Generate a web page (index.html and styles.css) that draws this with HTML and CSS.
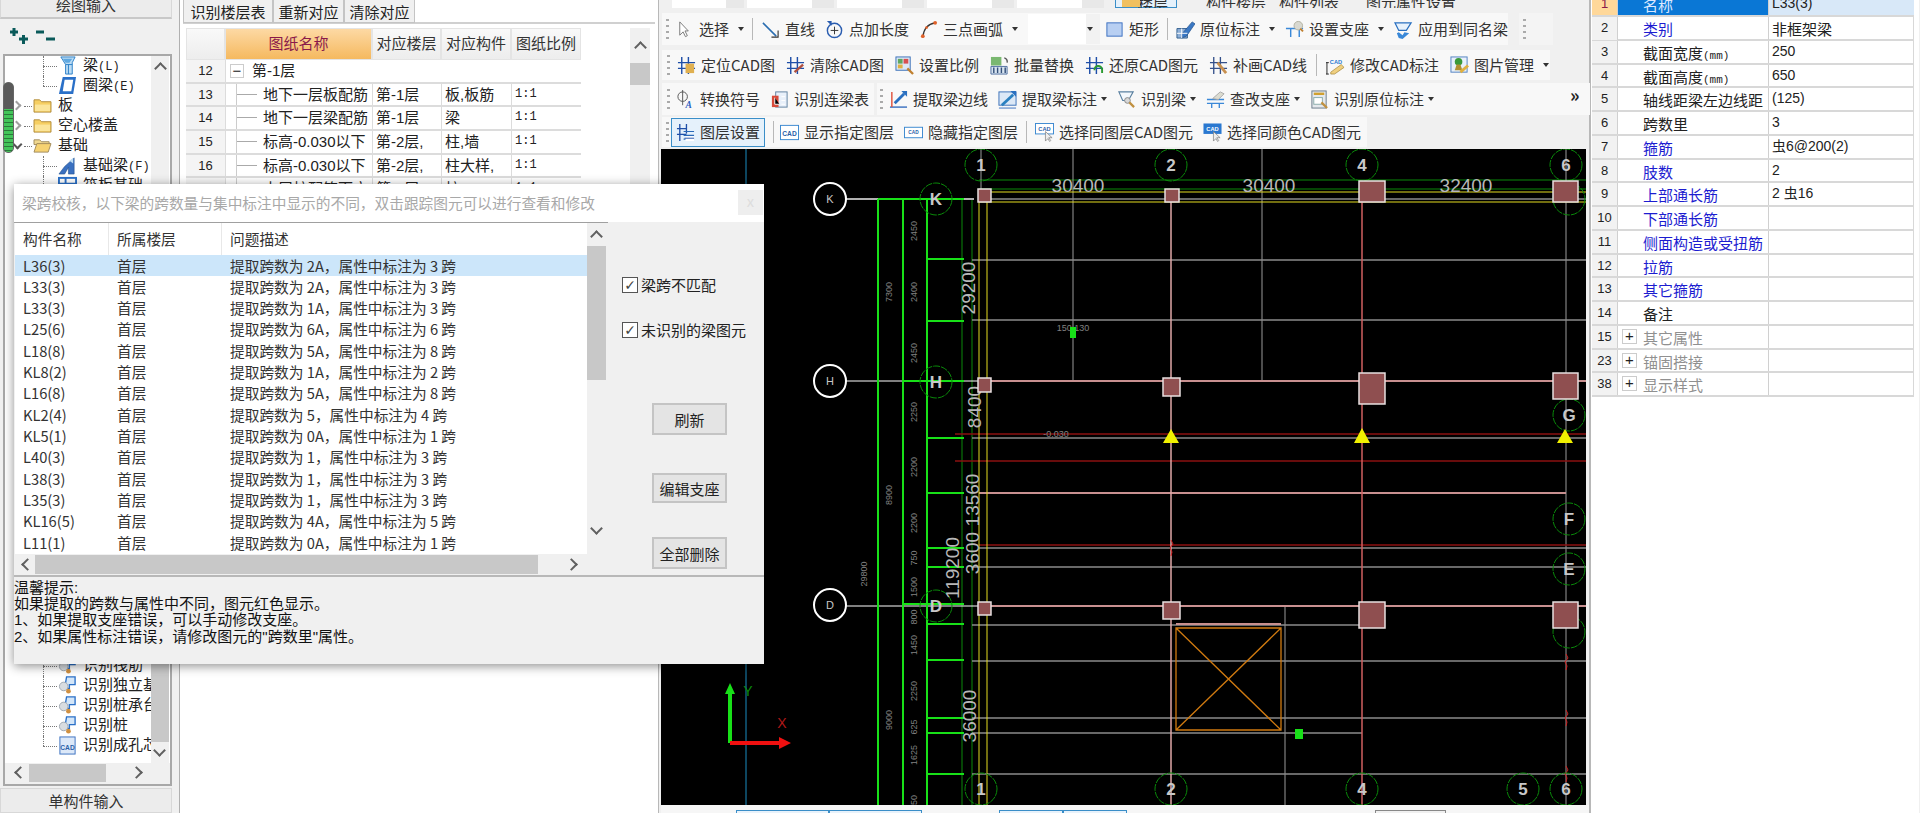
FILE: index.html
```html
<!DOCTYPE html>
<html lang="zh-CN">
<head>
<meta charset="utf-8">
<title>梁跨校核</title>
<link rel="stylesheet" href="styles.css">
</head>
<body>
<svg class="defs" width="0" height="0">
  <defs>
    <symbol id="i-arrow" viewBox="0 0 20 20"><path d="M5 2v14l3.500-3.500 2.500 5 2-1-2.500-5H14z" fill="#fff" stroke="#777"/></symbol>
    <symbol id="i-line" viewBox="0 0 20 20"><path d="M2 3l14 14" stroke="#2a6db0" stroke-width="1.600" fill="none"/><path d="M11 18h7v-7" stroke="#333" stroke-width="1.200" fill="none"/></symbol>
    <symbol id="i-len" viewBox="0 0 20 20"><circle cx="10" cy="11" r="7.500" fill="none" stroke="#2a5db0" stroke-width="1.500"/><path d="M10 7v8M6 11h8" stroke="#333"/><path d="M2 1h5v5z" fill="#2a5db0"/></symbol>
    <symbol id="i-arc" viewBox="0 0 20 20"><path d="M4 18C5 9 10 4 17 3" fill="none" stroke="#333" stroke-width="1.400"/><circle cx="4" cy="17" r="2" fill="#e0622a"/><circle cx="17" cy="3" r="2" fill="#e0622a"/><circle cx="8" cy="8" r="1.500" fill="#e0622a"/></symbol>
    <symbol id="i-rect" viewBox="0 0 20 20"><rect x="2" y="3" width="16" height="14" fill="#b8cff2" stroke="#3a6fc0"/></symbol>
    <symbol id="i-orig" viewBox="0 0 20 20"><path d="M1 9h11v10H1z" fill="#8fb0d8" stroke="#34608f"/><path d="M6 15L17 2l3 2-9 13-5 2z" fill="#3a78c4" stroke="#1f4e8a" stroke-width=".7"/><path d="M1 14h11M6 9v10" stroke="#fff"/></symbol>
    <symbol id="i-support" viewBox="0 0 20 20"><path d="M1 9h18M6 9v9M15 9v9" stroke="#3a88d8" stroke-width="1.500" fill="none"/><circle cx="14" cy="6" r="4.500" fill="#d8d8d0" stroke="#b0b0a0"/><path d="M16 9l3 3" stroke="#c08030" stroke-width="2"/></symbol>
    <symbol id="i-apply" viewBox="0 0 20 20"><path d="M1 3h17l-5 8H5z" fill="#e8f2fc" stroke="#2a70c0" stroke-width="1.300"/><path d="M5 19l-2-5 2-1 4 3 2-3 5 1-7 6z" fill="#3a88d8"/></symbol>
    <symbol id="i-pos" viewBox="0 0 20 20"><path d="M5 1v18M12 1v18M1 7h18M1 13h18" stroke="#1f4fa8" stroke-width="1.500" fill="none"/><rect x="9" y="8" width="9" height="10" fill="#e0b050"/></symbol>
    <symbol id="i-clear" viewBox="0 0 20 20"><path d="M5 1v18M12 1v18M1 7h18M1 13h18" stroke="#1f4fa8" stroke-width="1.500" fill="none"/><path d="M9 17l9-8" stroke="#b05040" stroke-width="2.500"/></symbol>
    <symbol id="i-restore" viewBox="0 0 20 20"><path d="M5 1v18M12 1v18M1 7h18M1 13h18" stroke="#1f4fa8" stroke-width="1.500" fill="none"/><path d="M10 15a4 4 0 0 1 8-1v4" stroke="#2a9a30" stroke-width="2" fill="none"/></symbol>
    <symbol id="i-draw" viewBox="0 0 20 20"><path d="M5 1v18M12 1v18M1 7h18M1 13h18" stroke="#34508a" stroke-width="1.400" fill="none"/><path d="M9 7l9 11" stroke="#c89050" stroke-width="3"/></symbol>
    <symbol id="i-scale" viewBox="0 0 20 20"><rect x="1" y="1" width="15" height="14" fill="#dce8f6" stroke="#3a70b8"/><rect x="3" y="3" width="5" height="5" fill="#60a860"/><rect x="9" y="3" width="5" height="5" fill="#d85050"/><rect x="3" y="9" width="5" height="4" fill="#e0b040"/><path d="M13 13l6 6" stroke="#c08030" stroke-width="2.400"/></symbol>
    <symbol id="i-batch" viewBox="0 0 20 20"><rect x="1" y="1" width="11" height="9" fill="#7ab870"/><path d="M1 11h17v8H1z" fill="#d8e4f0" stroke="#5070a0"/><path d="M4 12v6M8 12v6M12 12v6M16 12v6" stroke="#34507a" stroke-width="1.500"/><path d="M15 2a4 4 0 0 1 3 5" stroke="#555" stroke-width="1.500" fill="none"/></symbol>
    <symbol id="i-modcad" viewBox="0 0 20 20"><text x="4" y="8" class="ic-cad">CAD</text><path d="M5 17L16 9l3 3-10 7H5z" fill="#f0d080" stroke="#a08030" stroke-width=".7"/><path d="M1 7v12M0 7h3M0 19h3" stroke="#222"/></symbol>
    <symbol id="i-pic" viewBox="0 0 20 20"><rect x="1" y="1" width="17" height="16" fill="#e8f0fa" stroke="#5080c0"/><circle cx="9" cy="6" r="4" fill="#3a9a3a"/><path d="M7 9h4l2 6H5z" fill="#b09030"/><path d="M11 17l8-7" stroke="#e0b040" stroke-width="3"/></symbol>
    <symbol id="i-conv" viewBox="0 0 20 20"><circle cx="7" cy="7" r="5" fill="none" stroke="#555"/><path d="M7 0v16" stroke="#555"/><text x="10" y="19" class="ic-a">A</text></symbol>
    <symbol id="i-table" viewBox="0 0 20 20"><rect x="6" y="2" width="12" height="16" fill="#e8f0fa" stroke="#6080a0"/><path d="M2 6h7v12H2z" fill="#d84a3a"/><path d="M5 8v7h5M12 7h4M12 11h4M12 15h4" stroke="#fff"/></symbol>
    <symbol id="i-edge" viewBox="0 0 20 20"><path d="M1 18h18" stroke="#3a70c0" stroke-width="1.500"/><path d="M3 2v16" stroke="#e0503a" stroke-width="1.500"/><path d="M6 14L16 4" stroke="#2a70c0" stroke-width="3"/><path d="M13 1h6v6z" fill="#2a70c0"/></symbol>
    <symbol id="i-tag" viewBox="0 0 20 20"><rect x="1" y="2" width="18" height="14" fill="#dce8f6" stroke="#3a70b8"/><path d="M4 16L16 5" stroke="#2a80c0" stroke-width="3"/><path d="M13 1h6v6z" fill="#2a70c0"/><path d="M1 19h18" stroke="#3a70c0"/></symbol>
    <symbol id="i-find" viewBox="0 0 20 20"><path d="M2 2h15l-5 9H6z" fill="#f4f8fc" stroke="#5a80a0" stroke-width="1.200"/><circle cx="11" cy="11" r="3" fill="#d8d8d8" stroke="#888"/><path d="M13 13l5 5" stroke="#c09040" stroke-width="2.400"/></symbol>
    <symbol id="i-chk" viewBox="0 0 20 20"><path d="M1 10h18M1 14h18M6 14v5M14 14v5" stroke="#3a88d8" stroke-width="1.400" fill="none"/><path d="M7 9l8-7 4 2-6 6z" fill="#dcdcd0" stroke="#aaa"/></symbol>
    <symbol id="i-forig" viewBox="0 0 20 20"><rect x="2" y="1" width="15" height="18" fill="#e4e8ec" stroke="#6a7a8a"/><path d="M4 4h11" stroke="#d0a030" stroke-width="2.500"/><rect x="4" y="8" width="9" height="7" fill="#fff" stroke="#8aa"/><path d="M12 13l6 6" stroke="#c09040" stroke-width="2.400"/></symbol>
    <symbol id="i-layer" viewBox="0 0 20 20"><path d="M4 1v18M11 1v10M1 6h10M1 12h10" stroke="#1f4fa8" stroke-width="1.400" fill="none"/><path d="M8 9h11M8 13h11M8 17h11" stroke="#2a6ab8" stroke-width="1.200"/><rect x="10" y="14" width="9" height="5" fill="#fff"/><path d="M9 16h10" stroke="#1f4fa8"/></symbol>
    <symbol id="i-cad" viewBox="0 0 20 20"><rect x=".5" y="2.500" width="19" height="15" fill="#fff" stroke="#3a88d0"/><text x="10" y="13.500" class="ic-c1">CAD</text></symbol>
    <symbol id="i-hide" viewBox="0 0 20 20"><rect x=".5" y="4.500" width="19" height="11" fill="#fff" stroke="#3a88d0"/><text x="10" y="12" class="ic-c2">CAD</text></symbol>
    <symbol id="i-sel" viewBox="0 0 20 20"><rect x=".5" y=".5" width="19" height="11" fill="#fff" stroke="#3a88d0"/><text x="10" y="8.500" class="ic-c2b">CAD</text><path d="M11 9v10l2.500-2.500 2 3 1-1-2-3H18z" fill="#eee" stroke="#777" stroke-width=".7"/></symbol>
    <symbol id="i-selc" viewBox="0 0 20 20"><rect x=".5" y=".5" width="19" height="11" fill="#2a78d0"/><text x="10" y="8.500" class="ic-c2w">CAD</text><path d="M11 9v10l2.500-2.500 2 3 1-1-2-3H18z" fill="#eee" stroke="#777" stroke-width=".7"/></symbol>
    <symbol id="i-folder" viewBox="0 0 20 18"><path d="M1 3h6l2 2h10v11H1z" fill="#f6cf62" stroke="#b08a3a"/><path d="M2 8h16v7H2z" fill="#fbe59a"/></symbol>
    <symbol id="i-open" viewBox="0 0 20 18"><path d="M1 3h6l2 2h8v3H1z" fill="#f0d890" stroke="#a08a5a"/><path d="M1 16l3-9h15l-3 9z" fill="#f6d272" stroke="#a08a5a"/></symbol>
    <symbol id="i-beam" viewBox="0 0 20 20"><path d="M3 1h15l-3 6v12H8V9z" fill="#bcdcf4" stroke="#2a80c8"/><path d="M8 9h7M11 9v10" stroke="#2a80c8"/><path d="M5 3h10l-3 4H8z" fill="#5fa8e0"/></symbol>
    <symbol id="i-ring" viewBox="0 0 20 20"><path d="M5 1h14l-3 18H1z" fill="#2a70c8"/><path d="M7 4h9l-2 12H5z" fill="#fff"/></symbol>
    <symbol id="i-fbeam" viewBox="0 0 20 20"><path d="M1 19l6-8 10-9v17h-6v-7l-4 7z" fill="#3a70c0" stroke="#1f4e8a" stroke-width=".6"/><path d="M12 5l4-3v6z" fill="#bcdcf4"/></symbol>
    <symbol id="i-raft" viewBox="0 0 20 20"><rect x="1" y="2" width="18" height="16" fill="#fff" stroke="#2a70c8" stroke-width="2"/><path d="M1 8h18M8 2v16" stroke="#2a70c8" stroke-width="2"/></symbol>
    <symbol id="i-rec" viewBox="0 0 20 20"><path d="M9 1h9v8h-6v4H7z" fill="#d4e6f8" stroke="#2a70c8" stroke-width="1.400"/><circle cx="6" cy="11" r="4.500" fill="#d8dce0" stroke="#a0a8b0"/><circle cx="11" cy="16" r="2.500" fill="#d09040"/></symbol>
    <symbol id="i-rcad" viewBox="0 0 20 20"><rect x="2" y="1" width="16" height="18" fill="#dce8f8" stroke="#3a70c0"/><text x="10" y="15" class="ic-c1">CAD</text></symbol>
  </defs>
</svg>

<div class="app">
  <aside class="left">
    <div class="tab tab-top">绘图输入</div>
    <div class="tree-tools">
      <svg class="tt" viewBox="0 0 22 20"><path d="M2 5h8M6 1v8M11 12h9M15.500 8v9" stroke="#0a5a5a" stroke-width="3" fill="none"/></svg>
      <svg class="tt" viewBox="0 0 22 20"><path d="M1 5h8M11 12h9" stroke="#0a5a5a" stroke-width="3" fill="none"/></svg>
    </div>
    <div class="tree">
      <div class="tree-main">
        <div class="tree-body">
          <div class="tn child"><svg class="ti"><use href="#i-beam"/></svg><span>梁<span class="lat">(L)</span></span></div>
          <div class="tn child last"><svg class="ti"><use href="#i-ring"/></svg><span>圈梁<span class="lat">(E)</span></span></div>
          <div class="tn parent"><i class="chev"></i><svg class="fi"><use href="#i-folder"/></svg><span>板</span></div>
          <div class="tn parent"><i class="chev"></i><svg class="fi"><use href="#i-folder"/></svg><span>空心楼盖</span></div>
          <div class="tn parent"><i class="chev open"></i><svg class="fi"><use href="#i-open"/></svg><span>基础</span></div>
          <div class="tn child"><svg class="ti"><use href="#i-fbeam"/></svg><span>基础梁<span class="lat">(F)</span></span></div>
          <div class="tn child"><svg class="ti"><use href="#i-raft"/></svg><span>筏板基础</span></div>
          <div class="tree-hidden"></div>
          <div class="tn child"><svg class="ti"><use href="#i-rec"/></svg><span>识别筏筋</span></div>
          <div class="tn child"><svg class="ti"><use href="#i-rec"/></svg><span>识别独立基础</span></div>
          <div class="tn child"><svg class="ti"><use href="#i-rec"/></svg><span>识别桩承台</span></div>
          <div class="tn child"><svg class="ti"><use href="#i-rec"/></svg><span>识别桩</span></div>
          <div class="tn child last"><svg class="ti"><use href="#i-rcad"/></svg><span>识别成孔芯</span></div>
        </div>
        <div class="vscroll">
          <i class="arr"></i>
          <div class="vthumb"></div>
          <i class="arr dn"></i>
        </div>
      </div>
      <div class="hscroll"><i class="harr"></i><div class="hthumb"></div><i class="harr rt"></i></div>
    </div>
    <div class="tab tab-bottom">单构件输入</div>
    <div class="meter"></div>
  </aside>

  <section class="sheet">
    <div class="sheet-btns">
      <button class="sb w1">识别楼层表</button><button class="sb w2">重新对应</button><button class="sb w2">清除对应</button>
    </div>
    <div class="sheet-grid">
      <div class="grid">
        <div class="gh corner"></div><div class="gh active">图纸名称</div><div class="gh">对应楼层</div><div class="gh">对应构件</div><div class="gh">图纸比例</div>
        <div class="gn">12</div><div class="gc wide"><span class="minus">−</span>第-1层</div>
        <div class="gn">13</div><div class="gc name">地下一层板配筋</div><div class="gc">第-1层</div><div class="gc">板,板筋</div><div class="gc lat">1:1</div>
        <div class="gn">14</div><div class="gc name">地下一层梁配筋</div><div class="gc">第-1层</div><div class="gc">梁</div><div class="gc lat">1:1</div>
        <div class="gn">15</div><div class="gc name">标高-0.030以下</div><div class="gc">第-2层,</div><div class="gc">柱,墙</div><div class="gc lat">1:1</div>
        <div class="gn">16</div><div class="gc name">标高-0.030以下</div><div class="gc">第-2层,</div><div class="gc">柱大样,</div><div class="gc lat">1:1</div>
        <div class="gn">17</div><div class="gc name">本层柱配筋下方</div><div class="gc">第-2层</div><div class="gc">柱</div><div class="gc lat">1:1</div>
      </div>
      <div class="grid-scroll"><i class="arr"></i><div class="gthumb"></div></div>
    </div>
  </section>

  <main class="work">
    <div class="band b0">
      <div class="cbox"></div><div class="cbox"></div><div class="cbox"></div><div class="cbox"></div><div class="cbox"></div>
      <div class="b0-btn"><span class="b0-ico"></span>楼层</div>
      <span class="b0-t t1">构件楼层</span><span class="b0-t t2">构件列表</span><span class="b0-t t3">图元属性设置</span>
    </div>
    <div class="bands r2">
      <div class="band">
        <i class="grip"></i>
        <div class="t"><svg class="ic"><use href="#i-arrow"/></svg>选择<i class="cr"></i></div><i class="sep"></i>
        <div class="t"><svg class="ic"><use href="#i-line"/></svg>直线</div>
        <div class="t"><svg class="ic"><use href="#i-len"/></svg>点加长度</div>
        <div class="t"><svg class="ic"><use href="#i-arc"/></svg>三点画弧<i class="cr"></i></div>
        <div class="combo"><i class="cr"></i></div>
        <div class="t"><svg class="ic"><use href="#i-rect"/></svg>矩形</div><i class="sep"></i>
        <div class="t"><svg class="ic"><use href="#i-orig"/></svg>原位标注<i class="cr"></i></div>
        <div class="t"><svg class="ic"><use href="#i-support"/></svg>设置支座<i class="cr"></i></div>
        <div class="t"><svg class="ic"><use href="#i-apply"/></svg>应用到同名梁</div>
      </div>
      <div class="band mini"><i class="grip"></i></div>
    </div>
    <div class="bands r3">
      <div class="band">
        <i class="grip"></i>
        <div class="t"><svg class="ic"><use href="#i-pos"/></svg>定位CAD图</div>
        <div class="t"><svg class="ic"><use href="#i-clear"/></svg>清除CAD图</div>
        <div class="t"><svg class="ic"><use href="#i-scale"/></svg>设置比例</div>
        <div class="t"><svg class="ic"><use href="#i-batch"/></svg>批量替换</div>
        <div class="t"><svg class="ic"><use href="#i-restore"/></svg>还原CAD图元</div>
        <div class="t"><svg class="ic"><use href="#i-draw"/></svg>补画CAD线</div><i class="sep"></i>
        <div class="t"><svg class="ic"><use href="#i-modcad"/></svg>修改CAD标注</div>
        <div class="t"><svg class="ic"><use href="#i-pic"/></svg>图片管理<i class="cr"></i></div>
      </div>
    </div>
    <div class="bands r4">
      <div class="band">
        <i class="grip"></i>
        <div class="t"><svg class="ic"><use href="#i-conv"/></svg>转换符号</div>
        <div class="t"><svg class="ic"><use href="#i-table"/></svg>识别连梁表</div>
      </div>
      <div class="band grow">
        <i class="grip"></i>
        <div class="t"><svg class="ic"><use href="#i-edge"/></svg>提取梁边线</div>
        <div class="t"><svg class="ic"><use href="#i-tag"/></svg>提取梁标注<i class="cr"></i></div>
        <div class="t"><svg class="ic"><use href="#i-find"/></svg>识别梁<i class="cr"></i></div>
        <div class="t"><svg class="ic"><use href="#i-chk"/></svg>查改支座<i class="cr"></i></div>
        <div class="t"><svg class="ic"><use href="#i-forig"/></svg>识别原位标注<i class="cr"></i></div>
        <span class="more">»</span>
      </div>
    </div>
    <div class="bands r5">
      <div class="band">
        <i class="grip"></i>
        <div class="t on"><svg class="ic"><use href="#i-layer"/></svg>图层设置</div><i class="sep"></i>
        <div class="t tight"><svg class="ic"><use href="#i-cad"/></svg>显示指定图层</div>
        <div class="t"><svg class="ic"><use href="#i-hide"/></svg>隐藏指定图层</div><i class="sep"></i>
        <div class="t"><svg class="ic"><use href="#i-sel"/></svg>选择同图层CAD图元</div>
        <div class="t"><svg class="ic"><use href="#i-selc"/></svg>选择同颜色CAD图元</div>
      </div>
    </div>

    <svg class="cad" viewBox="662 149 925 656">
      <path class="blue" d="M747 149V805"/>
      <path class="gd" d="M963 199V805M973 199V805M980 180H1587M980 189H1587"/>
      <path class="gr" d="M982 149V199M1074 149V381M1263 149V381M1567 149V805M1286 606V805"/>
      <path class="wl" d="M847 199H975"/>
      <path class="wh" d="M847 381H980M847 606H980"/>
      <path class="gb" d="M879 199V805M904 199V805M928 199V805M879 199H965M928 259H965M928 321H965M904 381H965M928 438H965M928 493H965M928 548H965M928 567H965M904 604H965M928 624H965M928 660H965M928 718H965M928 733H965M928 774H965"/>
      <path class="gr2" d="M980 199H1587M973 260H1587M973 320H1587M973 438H1587M980 548H1587M973 567H1587M973 625H1360M973 661H1587M973 718H1587M973 733H1363M973 774H1587"/>
      <path class="rd" d="M956 434H1587M956 461H1587M980 545H1587"/>
      <path class="pk" d="M980 381H1587M980 493H1567M980 606H1587M1177 624H1282"/>
      <path class="yl" d="M980 192H1587M980 202H1587M980 199V805M988 199V805"/>
      <path class="pkv" d="M1172 199V805"/>
      <path class="sm" d="M1363 199V805"/>
      <path class="or" d="M1177 628H1282V730H1177ZM1177 628L1282 730M1282 628L1177 730"/>
      <path class="zig" d="M1172 540l2 4-3 4 2 4-1 4M1567 654l2 4-3 4 2 4-1 4M1567 710l2 4-3 4 2 4-1 4M1567 766l2 4-3 4 2 4-1 4"/>
      <g class="bub">
        <circle cx="982" cy="165" r="16"/><circle cx="1172" cy="165" r="16"/><circle cx="1363" cy="165" r="16"/><circle cx="1567" cy="165" r="16"/>
        <circle cx="937" cy="199" r="16"/><circle cx="937" cy="382" r="16"/><circle cx="937" cy="606" r="16"/>
        <circle cx="1570" cy="199" r="16"/><circle cx="1570" cy="415" r="16"/><circle cx="1570" cy="519" r="16"/><circle cx="1570" cy="569" r="16"/><circle cx="1570" cy="632" r="16"/>
        <circle cx="982" cy="789" r="16"/><circle cx="1172" cy="789" r="16"/><circle cx="1363" cy="789" r="16"/><circle cx="1524" cy="789" r="16"/><circle cx="1567" cy="789" r="16"/>
      </g>
      <g class="bubw"><circle cx="831" cy="199" r="16"/><circle cx="831" cy="381" r="16"/><circle cx="831" cy="605" r="16"/></g>
      <g class="lbl">
        <text x="982" y="171">1</text><text x="1172" y="171">2</text><text x="1363" y="171">4</text><text x="1567" y="171">6</text>
        <text x="937" y="205">K</text><text x="937" y="388">H</text><text x="937" y="612">D</text>
        <text x="1570" y="421">G</text><text x="1570" y="525">F</text><text x="1570" y="575">E</text>
        <text x="982" y="795">1</text><text x="1172" y="795">2</text><text x="1363" y="795">4</text><text x="1524" y="795">5</text><text x="1567" y="795">6</text>
      </g>
      <g class="lblw"><text x="831" y="203">K</text><text x="831" y="385">H</text><text x="831" y="609">D</text></g>
      <g class="dim">
        <text x="1079" y="192">30400</text><text x="1270" y="192">30400</text><text x="1467" y="192">32400</text>
        <text transform="rotate(-90 976 288)" x="976" y="288">29200</text>
        <text transform="rotate(-90 982 407)" x="982" y="407">8400</text>
        <text transform="rotate(-90 980 500)" x="980" y="500">13560</text>
        <text transform="rotate(-90 980 553)" x="980" y="553">3600</text>
        <text transform="rotate(-90 960 568)" x="960" y="568">119200</text>
        <text transform="rotate(-90 977 716)" x="977" y="716">36000</text>
      </g>
      <g class="sdim">
        <text transform="rotate(-90 918 231)" x="918" y="231">2450</text>
        <text transform="rotate(-90 893 292)" x="893" y="292">7300</text>
        <text transform="rotate(-90 918 292)" x="918" y="292">2400</text>
        <text transform="rotate(-90 918 353)" x="918" y="353">2450</text>
        <text transform="rotate(-90 918 412)" x="918" y="412">2250</text>
        <text transform="rotate(-90 918 467)" x="918" y="467">2200</text>
        <text transform="rotate(-90 893 495)" x="893" y="495">8900</text>
        <text transform="rotate(-90 918 523)" x="918" y="523">2200</text>
        <text transform="rotate(-90 918 558)" x="918" y="558">750</text>
        <text transform="rotate(-90 918 587)" x="918" y="587">1500</text>
        <text transform="rotate(-90 918 617)" x="918" y="617">800</text>
        <text transform="rotate(-90 918 645)" x="918" y="645">1450</text>
        <text transform="rotate(-90 918 691)" x="918" y="691">2250</text>
        <text transform="rotate(-90 918 727)" x="918" y="727">625</text>
        <text transform="rotate(-90 918 755)" x="918" y="755">1625</text>
        <text transform="rotate(-90 918 800)" x="918" y="800">50</text>
        <text transform="rotate(-90 868 574)" x="868" y="574">29800</text>
        <text transform="rotate(-90 893 720)" x="893" y="720">9000</text>
        <text x="1074" y="331">150 130</text>
        <text x="1057" y="437">-0.030</text>
      </g>
      <g class="cols">
        <rect x="979" y="189" width="13" height="13"/><rect x="1166" y="189" width="14" height="13"/><rect x="1360" y="181" width="26" height="21"/><rect x="1554" y="181" width="25" height="21"/>
        <rect x="979" y="378" width="13" height="14"/><rect x="1164" y="378" width="17" height="18"/><rect x="1360" y="373" width="26" height="31"/><rect x="1554" y="373" width="25" height="26"/>
        <rect x="979" y="602" width="13" height="13"/><rect x="1164" y="602" width="17" height="17"/><rect x="1360" y="602" width="26" height="26"/><rect x="1554" y="602" width="25" height="26"/>
      </g>
      <path class="tri" d="M1172 429l8 14h-16zM1363 428l8 15h-16zM1566 429l8 14h-16z"/>
      <path class="mark" d="M1071 327h6v11h-6zM1296 729h8v10h-8z"/>
      <path class="ax-g" d="M729 743V694h-3l5-11 5 11h-3v49z"/>
      <path class="ax-r" d="M731 741h49v-4l12 6-12 6v-4h-49z"/>
      <text class="ax-y" x="749" y="696">Y</text>
      <text class="ax-x" x="783" y="728">X</text>
    </svg>
    <div class="status">
      <span class="st s1"></span><span class="st s1"></span><span class="st s2"></span><span class="st s2"></span><span class="st s3"></span>
    </div>
  </main>

  <aside class="props">
    <div class="pr sel"><span class="pn">1</span><span class="pk-n">名称</span><span class="pv lat2">L33(3)</span></div>
    <div class="pr"><span class="pn">2</span><span class="pk-n blue-t">类别</span><span class="pv">非框架梁</span></div>
    <div class="pr"><span class="pn">3</span><span class="pk-n">截面宽度<span class="mm">(mm)</span></span><span class="pv lat2">250</span></div>
    <div class="pr"><span class="pn">4</span><span class="pk-n">截面高度<span class="mm">(mm)</span></span><span class="pv lat2">650</span></div>
    <div class="pr"><span class="pn">5</span><span class="pk-n">轴线距梁左边线距</span><span class="pv lat2">(125)</span></div>
    <div class="pr"><span class="pn">6</span><span class="pk-n">跨数里</span><span class="pv lat2">3</span></div>
    <div class="pr"><span class="pn">7</span><span class="pk-n blue-t">箍筋</span><span class="pv lat2">虫6@200(2)</span></div>
    <div class="pr"><span class="pn">8</span><span class="pk-n blue-t">肢数</span><span class="pv lat2">2</span></div>
    <div class="pr"><span class="pn">9</span><span class="pk-n blue-t">上部通长筋</span><span class="pv lat2">2 虫16</span></div>
    <div class="pr"><span class="pn">10</span><span class="pk-n blue-t">下部通长筋</span><span class="pv"></span></div>
    <div class="pr"><span class="pn">11</span><span class="pk-n blue-t">侧面构造或受扭筋</span><span class="pv"></span></div>
    <div class="pr"><span class="pn">12</span><span class="pk-n blue-t">拉筋</span><span class="pv"></span></div>
    <div class="pr"><span class="pn">13</span><span class="pk-n blue-t">其它箍筋</span><span class="pv"></span></div>
    <div class="pr"><span class="pn">14</span><span class="pk-n">备注</span><span class="pv"></span></div>
    <div class="pr"><span class="pn">15</span><span class="pk-n grey-t"><i class="plus">+</i>其它属性</span><span class="pv"></span></div>
    <div class="pr"><span class="pn">23</span><span class="pk-n grey-t"><i class="plus">+</i>锚固搭接</span><span class="pv"></span></div>
    <div class="pr"><span class="pn">38</span><span class="pk-n grey-t"><i class="plus">+</i>显示样式</span><span class="pv"></span></div>
  </aside>

  <div class="dialog">
    <div class="dlg-title"><span>梁跨校核，以下梁的跨数量与集中标注中显示的不同，双击跟踪图元可以进行查看和修改</span><span class="dlg-x">x</span></div>
    <div class="dlg-main">
      <div class="list">
        <div class="list-top">
          <div class="list-cols">
            <div class="lh"><span>构件名称</span><span>所属楼层</span><span>问题描述</span></div>
            <div class="lr sel"><span>L36(3)</span><span>首层</span><span>提取跨数为 2A，属性中标注为 3 跨</span></div>
            <div class="lr"><span>L33(3)</span><span>首层</span><span>提取跨数为 2A，属性中标注为 3 跨</span></div>
            <div class="lr"><span>L33(3)</span><span>首层</span><span>提取跨数为 1A，属性中标注为 3 跨</span></div>
            <div class="lr"><span>L25(6)</span><span>首层</span><span>提取跨数为 6A，属性中标注为 6 跨</span></div>
            <div class="lr"><span>L18(8)</span><span>首层</span><span>提取跨数为 5A，属性中标注为 8 跨</span></div>
            <div class="lr"><span>KL8(2)</span><span>首层</span><span>提取跨数为 1A，属性中标注为 2 跨</span></div>
            <div class="lr"><span>L16(8)</span><span>首层</span><span>提取跨数为 5A，属性中标注为 8 跨</span></div>
            <div class="lr"><span>KL2(4)</span><span>首层</span><span>提取跨数为 5，属性中标注为 4 跨</span></div>
            <div class="lr"><span>KL5(1)</span><span>首层</span><span>提取跨数为 0A，属性中标注为 1 跨</span></div>
            <div class="lr"><span>L40(3)</span><span>首层</span><span>提取跨数为 1，属性中标注为 3 跨</span></div>
            <div class="lr"><span>L38(3)</span><span>首层</span><span>提取跨数为 1，属性中标注为 3 跨</span></div>
            <div class="lr"><span>L35(3)</span><span>首层</span><span>提取跨数为 1，属性中标注为 3 跨</span></div>
            <div class="lr"><span>KL16(5)</span><span>首层</span><span>提取跨数为 4A，属性中标注为 5 跨</span></div>
            <div class="lr"><span>L11(1)</span><span>首层</span><span>提取跨数为 0A，属性中标注为 1 跨</span></div>
          </div>
          <div class="list-v"><i class="arr"></i><div class="lthumb"></div><i class="arr dn"></i></div>
        </div>
        <div class="list-h"><i class="harr"></i><div class="lhthumb"></div><i class="harr rt"></i></div>
      </div>
      <div class="side">
        <label class="chk c1"><i class="box">✓</i>梁跨不匹配</label>
        <label class="chk c2"><i class="box">✓</i>未识别的梁图元</label>
        <button class="act a1">刷新</button>
        <button class="act a2">编辑支座</button>
        <button class="act a3">全部删除</button>
      </div>
    </div>
    <div class="hint">温馨提示:<br>如果提取的跨数与属性中不同，图元红色显示。<br>1、如果提取支座错误，可以手动修改支座。<br>2、如果属性标注错误，请修改图元的"跨数里"属性。</div>
  </div>
</div>
</body>
</html>
```

FILE: styles.css
```css
* { box-sizing: border-box; }
html, body { margin: 0; height: 100%; overflow: hidden; }
body { font: 15px/1.2 "Liberation Sans", "Noto Sans CJK SC", sans-serif; color: #222; background: #f0f0f0; }
.defs { position: absolute; }
.app { display: flex; width: 1920px; height: 813px; position: relative; overflow: hidden; }

/* shared scrollbar chevrons */
.arr { display: flex; height: 16px; align-items: center; justify-content: center; flex: none; }
.arr::before { content: ""; width: 7px; height: 7px; border: solid #606060; border-width: 2px 0 0 2px; transform: translateY(2px) rotate(45deg); }
.arr.dn { transform: rotate(180deg); }
.harr { display: flex; width: 14px; height: 16px; align-items: center; justify-content: center; flex: none; }
.harr::before { content: ""; width: 7px; height: 7px; border: solid #606060; border-width: 2px 0 0 2px; transform: translateX(1px) rotate(-45deg); }
.harr.rt::before { transform: translateX(-1px) rotate(135deg); }

/* left tree */
.left { width: 180px; flex: none; display: flex; flex-direction: column; position: relative; border-right: 1px solid #b0b0b0; padding-right: 7px; }
.tab { background: #ececec; text-align: center; color: #333; border: 1px solid #d8d8d8; }
.tab-top { height: 19px; line-height: 12px; border-top: 0; border-bottom: 2px solid #c8c8c8; }
.tab-bottom { height: 25px; line-height: 25px; margin-top: 2px; }
.tree-tools { height: 35px; padding: 0 0 0 8px; display: flex; gap: 5px; align-items: center; }
.tt { width: 22px; height: 20px; }
.tree { flex: 1; min-height: 0; margin-left: 3px; border: 2px solid #a8a8a8; background: #fff; display: flex; flex-direction: column; }
.tree-main { flex: 1; min-height: 0; display: flex; }
.tree-body { flex: 1; min-width: 0; overflow: hidden; }
.tn { height: 20px; padding-bottom: 2px; display: flex; align-items: center; white-space: nowrap; position: relative; font-size: 15px; }
.tn.child { padding-left: 53px; gap: 6px; }
.tn.child::before { content: ""; position: absolute; left: 38px; width: 14px; top: 10px; border-top: 1px dotted #777; }
.tn.child::after { content: ""; position: absolute; left: 38px; top: 0; height: 20px; border-left: 1px dotted #777; }
.tn.child.last::after { height: 10px; }
.tn.parent { padding-left: 28px; gap: 6px; }
.tn.parent::before { content: ""; position: absolute; left: 19px; width: 8px; top: 10px; border-top: 1px dotted #777; }
.ti { width: 19px; height: 19px; flex: none; }
.fi { width: 19px; height: 17px; flex: none; }
.lat { font: 12px "Liberation Mono", monospace; }
.chev { position: absolute; left: 8px; top: 6px; width: 7px; height: 7px; border: solid #a0a0a0; border-width: 2px 2px 0 0; transform: rotate(45deg); }
.chev.open { border-color: #555; transform: translate(1px, -1px) rotate(135deg); }
.tree-hidden { height: 460px; }
.vscroll { width: 18px; margin-right: 1px; flex: none; background: #f0f0f0; display: flex; flex-direction: column; }
.vscroll .arr { height: 20px; }
.vthumb { flex: 1; margin: 200px 0 1px; background: #c8c8c8; }
.hscroll { height: 21px; background: #f0f0f0; display: flex; align-items: center; padding: 0 14px 0 7px; border-bottom: 2px solid #f0f0f0; }
.hthumb { width: 77px; height: 18px; margin: 0 24px 0 3px; background: #c8c8c8; }
.meter { position: absolute; left: 3px; top: 82px; width: 11px; height: 71px; border-radius: 5px; background: linear-gradient(#5a5a5a 26px, transparent 26px), repeating-linear-gradient(#43c45a 0 3px, #2a7a3a 3px 4px); border: 1px solid #666; }

/* drawing sheet table */
.sheet { width: 479px; flex: none; background: #fff; border-right: 1px solid #b8b8b8; padding-left: 3px; }
.sheet-btns { display: flex; height: 24px; width: 472px; background: #fff; border-bottom: 2px solid #d0d0d0; }
.sb { height: 23px; padding: 0; border: 1px solid #c4c4c4; border-top: 0; background: #f0f0f0; font: 15px "Noto Sans CJK SC", sans-serif; color: #222; }
.sb.w1 { width: 90px; }
.sb.w2 { width: 71px; }
.sheet-grid { display: flex; padding: 4px 0 0 3px; height: 160px; overflow: hidden; }
.grid { width: 395px; display: grid; grid-template-columns: 39px 147px 69px 70px 70px; grid-template-rows: 32px; grid-auto-rows: 23.700px; }
.gh { height: 32px; background: linear-gradient(#f9f9f9, #ededed); border: 1px solid #e4e4e4; display: flex; align-items: center; justify-content: center; color: #333; }
.gh.active { background: linear-gradient(#fdd9a4, #f5b95f); color: #8a1a4a; }
.gn { background: #f4f4f4; border-bottom: 2px solid #dcdcdc; text-align: center; line-height: 21px; font-size: 13px; }
.gc { border-bottom: 2px solid #dcdcdc; border-left: 1px solid #dcdcdc; padding-left: 3px; line-height: 21px; white-space: nowrap; overflow: hidden; }
.gc.wide { grid-column: span 4; padding-left: 4px; display: flex; align-items: center; gap: 8px; }
.gc.name { padding-left: 37px; position: relative; }
.gc.name::before { content: ""; position: absolute; left: 10px; top: 10px; width: 21px; border-top: 1px solid #aaa; }
.gc.name::after { content: ""; position: absolute; left: 10px; top: 0; bottom: 0; border-left: 1px solid #ccc; }
.gc.lat { font: 12px/21px "Liberation Mono", monospace; }
.minus { width: 14px; height: 14px; border: 1px solid #ccc; line-height: 11px; text-align: center; flex: none; }
.grid-scroll { width: 20px; height: 156px; margin-left: 49px; background: #f0f0f0; }
.grid-scroll .arr { height: 35px; }
.gthumb { height: 22px; background: #c8c8c8; }

/* toolbars */
.work { width: 931px; flex: none; display: flex; flex-direction: column; background: #f0f0f0; overflow: hidden; padding-left: 2px; }
.band { display: flex; align-items: center; gap: 10px; background: #f8f8f8; padding-left: 4px; white-space: nowrap; font-family: "Noto Sans CJK SC", sans-serif; color: #333; }
.bands { display: flex; gap: 3px; padding-left: 1px; }
.band.b0 { height: 8px; overflow: hidden; gap: 3px; align-items: flex-end; padding-left: 11px; background: transparent; }
.cbox { width: 87px; height: 8px; flex: none; background: linear-gradient(90deg, #fff 75%, #e8e8e8 75%); }
.cbox:first-child { width: 72px; }
.b0-btn { margin-left: 8px; width: 62px; height: 22px; border: 1px solid #3a8ec8; background: #e5f1fb; line-height: 33px; padding-left: 22px; flex: none; position: relative; }
.b0-ico { position: absolute; left: 6px; top: 10px; width: 18px; height: 10px; background: #f0c060; }
.b0-t { flex: none; line-height: 4px; height: 8px; font-size: 15px; }
.t1 { margin-left: 26px; } .t2 { margin-left: 10px; } .t3 { margin-left: 24px; }
.r2 { margin-top: 5px; height: 32px; }
.r2 .band { width: 846px; }
.r2 .band.mini { width: 34px; margin-left: 8px; background: #f4f4f4; }
.r2 .combo { margin-right: -5px; }
.r3 { margin-top: 5px; height: 30px; }
.r3 .band { width: 888px; gap: 11px; padding-left: 5px; }
.r4 { margin-top: 3px; height: 32px; }
.r4 .band { width: 212px; padding-left: 5px; }
.r4 .band.grow { flex: 1; padding-left: 3px; position: relative; }
.r4 .cr { margin-left: -1px; }
.r5 { margin-top: 2px; height: 30px; }
.r5 .band { width: 705px; }
.r5 .tight { margin-left: -2px; }
.grip { width: 3px; height: 20px; flex: none; margin-right: -4px; background: repeating-linear-gradient(#aaa 0 2px, transparent 2px 6px); }
.t { display: flex; align-items: center; gap: 5px; font-size: 15px; flex: none; }
.t.on { height: 29px; margin-left: -4px; padding: 0 4px; border: 1px solid #3a8ec8; background: #e5f1fb; }
.ic { width: 19px; height: 19px; flex: none; }
.sep { width: 1px; height: 22px; flex: none; background: #b8b8b8; margin: 0 -2px; }
.cr { display: block; width: 0; height: 0; flex: none; border: 3.500px solid transparent; border-top: 4px solid #333; border-bottom: 0; margin-left: 4px; }
.combo { width: 72px; height: 30px; background: linear-gradient(90deg, #fff 80%, #f2f2f2 80%); display: flex; align-items: center; justify-content: flex-end; padding-right: 7px; flex: none; }
.more { position: absolute; left: 693px; top: 1px; font-weight: bold; font-size: 18px; line-height: 20px; color: #222; }
.ic-cad { font: bold 6px "Liberation Sans", sans-serif; fill: #2a78d0; }
.ic-a { font: italic bold 10px "Liberation Serif", serif; fill: #2a60c0; }
.ic-c1 { font: bold 7px "Liberation Sans Narrow", "Liberation Sans", sans-serif; fill: #2a60a8; text-anchor: middle; }
.ic-c2 { font: bold 5px "Liberation Sans", sans-serif; fill: #2a60a8; text-anchor: middle; }
.ic-c2b { font: bold 6px "Liberation Sans", sans-serif; fill: #2a60a8; text-anchor: middle; }
.ic-c2w { font: bold 6px "Liberation Sans", sans-serif; fill: #fff; text-anchor: middle; }

/* cad canvas */
.cad { width: 925px; height: 656px; flex: none; margin-top: 2px; background: #000; display: block; }
.cad path, .cad circle { fill: none; }
.blue { stroke: #1a8cc0; stroke-width: 1; }
.gd { stroke: #0a8a0a; stroke-width: 1; }
.gr { stroke: #9a9a9a; stroke-width: 1; }
.wl { stroke: #b0b0b0; stroke-width: 2; }
.wh { stroke: #fff; stroke-width: 1; }
.gb { stroke: #18e018; stroke-width: 2; }
.gr2 { stroke: #8a8a8a; stroke-width: 1.500; }
.rd { stroke: #8a1010; stroke-width: 1.500; }
.pk { stroke: #c89090; stroke-width: 2; }
.yl { stroke: #e4dc20; stroke-width: 1; }
.pkv { stroke: #e0a8a8; stroke-width: 1.500; }
.sm { stroke: #d06060; stroke-width: 1.500; }
.or { stroke: #d07a10; stroke-width: 1.300; }
.zig { stroke: #d02020; stroke-width: 1; }
.bub circle { stroke: #0a8a0a; stroke-width: 1; stroke-dasharray: 7 1; }
.bubw circle { stroke: #fff; stroke-width: 2; fill: #000; }
.lbl text { font: bold 17px "Liberation Sans Narrow", "Liberation Sans", sans-serif; fill: #c8c8c8; text-anchor: middle; }
.lblw text { font: 11px "Liberation Sans", sans-serif; fill: #c8c8c8; text-anchor: middle; }
.dim text { font: 19px "Liberation Sans", sans-serif; fill: #b8b8b8; text-anchor: middle; }
.sdim text { font: 9px "Liberation Sans", sans-serif; fill: #808080; text-anchor: middle; }
.cols rect { fill: #8f4f50; stroke: #e8e0e0; stroke-width: 1.500; }
.cad .tri { fill: #f0f000; }
.cad .mark { fill: #18e018; }
.cad .ax-g { fill: #18e018; }
.cad .ax-r { fill: #f01010; }
.ax-y { font: 14px "Liberation Sans", sans-serif; fill: #0a8a0a; text-anchor: middle; }
.ax-x { font: 14px "Liberation Sans", sans-serif; fill: #b01818; text-anchor: middle; }
.status { height: 8px; flex: 1; display: flex; background: #f6f6f6; overflow: hidden; padding: 5px 0 0 75px; }
.st { height: 6px; display: block; background: #e8f2fb; border: 1px solid #3a8ec8; flex: none; }
.s1 { width: 93px; }
.s2 { width: 64px; }
.st.s2:nth-child(3) { margin-left: 77px; }
.s3 { width: 71px; margin-left: 248px; border-color: #888; background: #f0f0f0; }

/* property table */
.props { width: 330px; flex: none; background: #fff; border-left: 2px solid #b8b8b8; margin-left: -1px; padding-left: 1px; overflow: hidden; }
.pr { display: grid; grid-template-columns: 26px 151px 145px; height: 23.750px; width: 322px; border-bottom: 2px solid #d8d8d8; border-right: 1px solid #d8d8d8; line-height: 23px; }
.pr:first-child { margin-top: -6.750px; }
.pn { background: #f2f2f2; text-align: center; font-size: 13px; border-right: 1px solid #d0d0d0; font-family: "Liberation Sans", sans-serif; line-height: 21px; }
.pk-n { padding-left: 25px; font-family: "Noto Sans CJK SC", sans-serif; white-space: nowrap; overflow: hidden; border-right: 1px solid #d0d0d0; color: #222; position: relative; }
.pv { padding-left: 3px; font-family: "Noto Sans CJK SC", sans-serif; color: #222; white-space: nowrap; }
.lat2 { font: 14px/21px "Liberation Sans", "Noto Sans CJK SC", sans-serif; }
.mm { font: 11px "Liberation Mono", monospace; }
.blue-t { color: #1c1cd0; }
.grey-t { color: #909090; }
.plus { position: absolute; left: 4px; top: 3px; width: 15px; height: 15px; border: 1px solid #ccc; font: 15px/12px "Liberation Sans", sans-serif; text-align: center; color: #222; }
.pr.sel .pn { background: #ffd89a; color: #8a1a4a; }
.pr.sel .pk-n { background: #0a77d5; color: #dce8ff; }
.pr.sel .pv { background: #d8e8f8; }

/* dialog */
.dialog { position: absolute; left: 14px; top: 184px; width: 750px; height: 480px; background: #f0f0f0; box-shadow: 0 2px 10px rgba(0, 0, 0, .45); display: flex; flex-direction: column; font-family: "Liberation Sans Narrow", "Noto Sans CJK SC", sans-serif; font-size: 14.700px; }
.dlg-title { height: 38px; flex: none; background: #fff; display: flex; align-items: center; justify-content: space-between; padding: 0 1px 0 8px; color: #a8a8a8; }
.dlg-x { width: 25px; height: 25px; background: #eee; color: #ddd; text-align: center; line-height: 22px; margin-top: -1px; }
.dlg-main { display: flex; height: 355px; flex: none; border-bottom: 2px solid #b8b8b8; }
.list { width: 594px; flex: none; display: flex; flex-direction: column; border-top: 1px solid #a0a0a0; }
.list-top { display: flex; height: 332px; margin-left: 1px; }
.list-cols { width: 572px; flex: none; background: #fff; }
.lh, .lr { display: grid; grid-template-columns: 94px 113px 1fr; }
.lh { height: 31.500px; align-items: center; color: #333; }
.lh span { padding-left: 8px; height: 100%; line-height: 31px; border-right: 1px solid #e8e8e8; }
.lh span:last-child { border: 0; }
.lr { height: 21.330px; line-height: 21px; color: #333; white-space: nowrap; }
.lr span { padding-left: 8px; }
.lr.sel { background: #cce6fa; }
.list-v { width: 19px; flex: none; background: #f0f0f0; }
.list-v .arr { height: 23px; }
.lthumb { height: 134px; background: #c8c8c8; }
.list-v .dn { margin-top: 142px; height: 18px; }
.list-h { height: 21px; margin-left: 1px; display: flex; align-items: center; background: #f0f0f0; padding-left: 4px; }
.lhthumb { width: 503px; height: 19px; background: #c8c8c8; margin: 0 27px 0 2px; }
.side { flex: 1; display: flex; flex-direction: column; }
.chk { display: flex; align-items: center; gap: 3px; height: 16px; margin-left: 14px; font-size: 15px; color: #222; }
.c1 { margin-top: 55px; }
.c2 { margin-top: 29px; }
.box { width: 16px; height: 16px; border: 1px solid #555; background: #fff; font: normal 14px/14px "DejaVu Sans", sans-serif; text-align: center; color: #444; flex: none; }
.act { width: 75px; height: 32px; margin-left: 44px; padding: 0; border: 2px solid #c4c4c4; background: #e4e4e4; font: 15px "Noto Sans CJK SC", sans-serif; color: #222; flex: none; }
.a1 { margin-top: 65px; }
.a2 { margin-top: 38px; height: 30px; }
.a3 { margin-top: 34px; }
.hint { padding-top: 3px; line-height: 16.200px; font-size: 15px; color: #111; font-family: "Liberation Sans", "Noto Sans CJK SC", sans-serif; }
```
